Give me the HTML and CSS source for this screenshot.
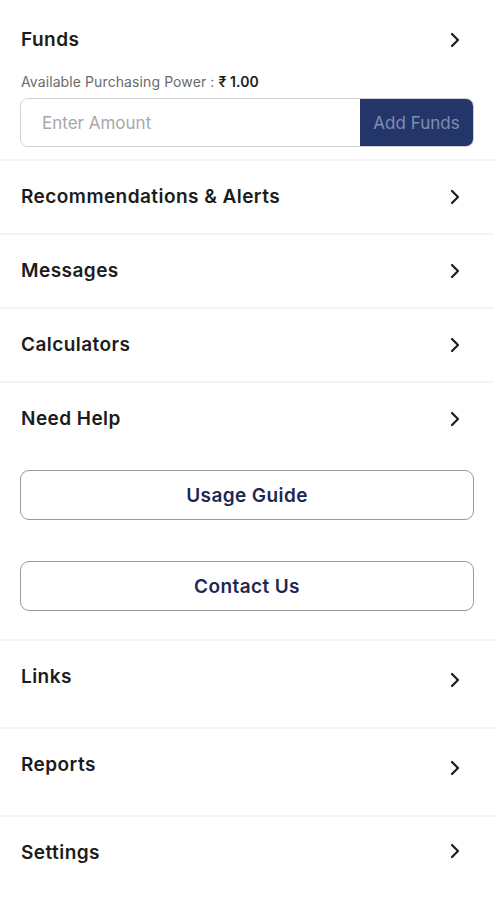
FILE: index.html
```html
<!DOCTYPE html>
<html lang="en">
<head>
    <meta charset="UTF-8">
    <meta name="viewport" content="width=device-width, initial-scale=1.0">
    <title>Menu</title>
    <link rel="stylesheet" href="styles.css">
</head>
<body>
    <!-- Funds -->
    <section class="funds">
        <div class="funds-head">
            <span class="item-title">Funds</span>
            <svg class="chevron" viewBox="0 0 10 16"><path d="M2 2l6 6-6 6"/></svg>
        </div>
        <div class="power">Available Purchasing Power : <b>₹ 1.00</b></div>
        <div class="fund-form">
            <input class="amount" type="text" placeholder="Enter Amount">
            <button class="add-funds">Add Funds</button>
        </div>
    </section>

    <!-- Menu list -->
    <div class="menu-row">
        <span class="item-title">Recommendations &amp; Alerts</span>
        <svg class="chevron" viewBox="0 0 10 16"><path d="M2 2l6 6-6 6"/></svg>
    </div>
    <div class="menu-row">
        <span class="item-title">Messages</span>
        <svg class="chevron" viewBox="0 0 10 16"><path d="M2 2l6 6-6 6"/></svg>
    </div>
    <div class="menu-row">
        <span class="item-title">Calculators</span>
        <svg class="chevron" viewBox="0 0 10 16"><path d="M2 2l6 6-6 6"/></svg>
    </div>

    <!-- Need help -->
    <section class="help">
        <div class="help-head">
            <span class="item-title">Need Help</span>
            <svg class="chevron" viewBox="0 0 10 16"><path d="M2 2l6 6-6 6"/></svg>
        </div>
        <button class="outline-btn">Usage Guide</button>
        <button class="outline-btn">Contact Us</button>
    </section>

    <div class="menu-row tall">
        <span class="item-title">Links</span>
        <svg class="chevron low" viewBox="0 0 10 16"><path d="M2 2l6 6-6 6"/></svg>
    </div>
    <div class="menu-row tall">
        <span class="item-title">Reports</span>
        <svg class="chevron low" viewBox="0 0 10 16"><path d="M2 2l6 6-6 6"/></svg>
    </div>
    <div class="menu-row tall last">
        <span class="item-title">Settings</span>
        <svg class="chevron" viewBox="0 0 10 16"><path d="M2 2l6 6-6 6"/></svg>
    </div>
</body>
</html>
```

FILE: styles.css
```css
body {
    margin: 0;
    background: #ffffff;
    color: #1c1c1c;
    font-family: Inter, "Noto Sans", "DejaVu Sans", sans-serif;
}

/* item title text */
.item-title {
    font-size: 19px;
    font-weight: 600;
    line-height: 24px;
    letter-spacing: 0.45px;
}

/* right arrow */
.chevron {
    width: 10px;
    height: 16px;
    fill: none;
    stroke: #1c1c1c;
    stroke-width: 2.2;
    stroke-linecap: round;
    stroke-linejoin: round;
    margin-right: 14px;
}

/* funds block */
.funds {
    padding: 28px 20px 12px 21px;
    border-bottom: 2px solid #f3f3f3;
}

.funds-head {
    display: flex;
    justify-content: space-between;
    align-items: center;
}

.power {
    margin-top: 22px;
    font-size: 14px;
    line-height: 16px;
    color: #6b6b6b;
    letter-spacing: 0.1px;
}

.power b {
    color: #1c1c1c;
    font-weight: 600;
}

.fund-form {
    display: flex;
    margin-top: 8px;
    margin-left: -1px;
    height: 47px;
    border: 1px solid #cfcfcf;
    border-radius: 8px;
    overflow: hidden;
}

.amount {
    flex: 1;
    border: none;
    outline: none;
    padding: 0 0 0 21px;
    font-family: inherit;
    font-size: 17px;
    color: #333;
}

.amount::placeholder {
    color: #a8a8a8;
}

.add-funds {
    width: 113px;
    border: none;
    background: #243669;
    color: #7f8db4;
    font-family: inherit;
    font-size: 17px;
    padding: 0;
}

/* menu rows */
.menu-row {
    display: flex;
    justify-content: space-between;
    align-items: center;
    height: 72px;
    padding: 0 20px 0 21px;
    border-bottom: 2px solid #f3f3f3;
}

.menu-row.tall {
    height: 86px;
    align-items: flex-start;
}

.menu-row.tall .item-title {
    margin-top: 24px;
}

.menu-row.tall .chevron {
    margin-top: 26px;
}

.menu-row.tall .chevron.low {
    margin-top: 31px;
}

.menu-row.last {
    border-bottom: none;
}

/* need help */
.help {
    padding: 0 20px 28px 20px;
    border-bottom: 2px solid #f3f3f3;
    display: flex;
    flex-direction: column;
    gap: 41px;
}

.help-head {
    display: flex;
    justify-content: space-between;
    align-items: center;
    height: 72px;
    padding-left: 1px;
    margin-bottom: -26px;
}

.outline-btn {
    height: 50px;
    border: 1px solid #9a9a9a;
    border-radius: 9px;
    background: #fff;
    color: #1f2852;
    font-family: inherit;
    font-size: 19px;
    font-weight: 600;
    letter-spacing: 0.4px;
}
```
